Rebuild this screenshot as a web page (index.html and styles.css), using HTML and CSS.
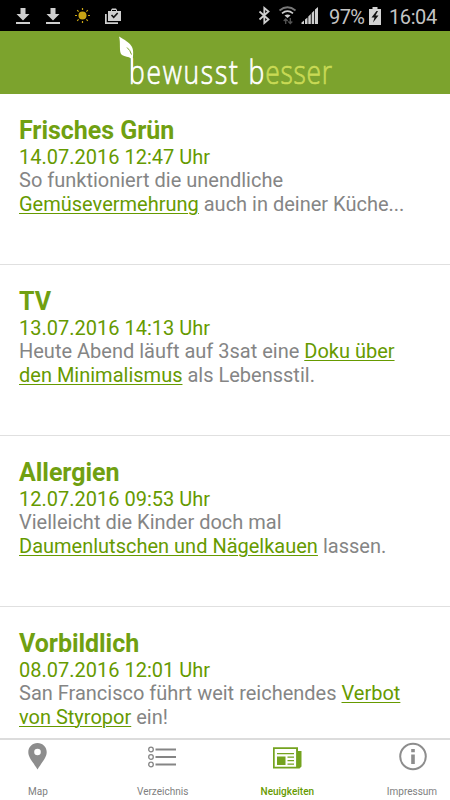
FILE: index.html
```html
<!DOCTYPE html>
<html lang="de">
<head>
<meta charset="utf-8">
<title>bewusst besser</title>
<link rel="stylesheet" href="styles.css">
</head>
<body>
<div class="app">
  <div class="status">
    <svg class="status-left" width="130" height="31" viewBox="0 0 130 31">
      <g fill="#cfcfcf">
        <path d="M20.500 8h5v6h4L23 20.500 16.500 14h4zM16 22h14v2H16z"/>
        <path d="M50.500 8h5v6h4L53 20.500 46.500 14h4zM46 22h14v2H46z"/>
        <path fill-rule="evenodd" d="M108 11h3v-1l1-1.500h4l1 1.500v1h4v10h-13zM112 11h4v-1h-4z"/>
        <path d="M105 14h1.700v8.300H118V24h-13z"/>
      </g>
      <path d="m111.500 15 2.200 2.400 4-4.400" fill="none" stroke="#111" stroke-width="1.600"/>
      <circle cx="82.500" cy="15.500" r="4" fill="#c9a514"/>
      <path d="M82.500 8v2M82.500 21v2M75 15.500h2M88 15.500h2M77.200 10.200l1.400 1.400M86.400 19.400l1.400 1.400M77.200 20.800l1.400-1.400M86.400 11.600l1.400-1.400" stroke="#c9a514" stroke-width="1.200"/>
    </svg>
    <div class="status-right">
      <svg width="66" height="31" viewBox="256 0 66 31">
        <path d="m259.500 11.500 9 8-4.200 3.500V8l4.200 3.500-9 8" fill="none" stroke="#cfcfcf" stroke-width="1.800"/>
        <path d="M279.500 10.500q8-6.500 16 0" fill="none" stroke="#777" stroke-width="1.700"/>
        <path d="M282 13.300q5.500-4.500 11 0" fill="none" stroke="#cfcfcf" stroke-width="1.700"/>
        <path d="M284.500 15.500q3-2.200 6 0L287.500 18z" fill="#cfcfcf"/>
        <path d="M285.700 24v-5m-2 2 2-2 2 2M290.300 18v5.500m-2-2 2 2 2-2" fill="none" stroke="#555" stroke-width="1.300"/>
        <path d="M301.500 24v-1.500l2.500-2V24zM305 24v-4.500l2.500-2V24zM308.300 24v-7.500l2.500-2.500v10zM311.700 24V13l2.500-2.500V24zM315 24V9.500L318 7v17z" fill="#cfcfcf"/>
      </svg>
      <span class="battery-text">97%</span>
      <svg class="battery" width="12" height="18" viewBox="0 0 12 18">
        <path d="M3.500 0h5v2H12v16H0V2h3.500z" fill="#d4d4d4"/>
        <path d="M7.500 4 2.500 10.500h3L4 15.500 9.500 8.500h-3L9 4z" fill="#111"/>
      </svg>
      <span class="clock">16:04</span>
    </div>
  </div>
  <header class="header">
    <svg width="450" height="63" viewBox="0 31 450 63">
      <path d="M119 36.500C121 42 118.500 53 122 55c3 1.800 6.500 1.500 9 3.500v22h1.900V58C134.500 46 131 43.500 119 36.500z" fill="#fff"/>
      <path d="M127 47.500q3.200 2.500 4.500 7" fill="none" stroke="#7ca32d" stroke-width="1"/>
      <g class="logo" transform="scale(.8 1)">
        <text class="logo-word" x="161.200" y="84" fill="#fff" stroke="#fff">bewusst</text>
        <text x="310.500" y="84" fill="#fff" stroke="#fff">b</text>
        <text x="331.600" y="84" fill="#c9da55" stroke="#c9da55">esser</text>
      </g>
    </svg>
  </header>
  <main class="list">
    <article class="item"><h2>Frisches Grün</h2><time>14.07.2016 12:47 Uhr</time><p>So funktioniert die unendliche<br><a>Gemüsevermehrung</a> auch in deiner Küche...</p></article>
    <article class="item"><h2>TV</h2><time>13.07.2016 14:13 Uhr</time><p>Heute Abend läuft auf 3sat eine <a>Doku über<br>den Minimalismus</a> als Lebensstil.</p></article>
    <article class="item"><h2>Allergien</h2><time>12.07.2016 09:53 Uhr</time><p>Vielleicht die Kinder doch mal<br><a>Daumenlutschen und Nägelkauen</a> lassen.</p></article>
    <article class="item"><h2>Vorbildlich</h2><time>08.07.2016 12:01 Uhr</time><p>San Francisco führt weit reichendes <a>Verbot<br>von Styropor</a> ein!</p></article>
  </main>
  <nav class="tabs">
    <div class="tab">
      <svg width="30" height="34" viewBox="0 0 30 34"><path fill="#8d8d8d" fill-rule="evenodd" d="M14.500 3c-5.200 0-9.200 4-9.200 9 0 5.500 4 9 9.200 17.500 5.200-8.500 9.200-12 9.200-17.500 0-5-4-9-9.200-9zm0 5.700a3.300 3.300 0 1 1 0 6.600 3.300 3.300 0 0 1 0-6.600z"/></svg>
      <span>Map</span>
    </div>
    <div class="tab">
      <svg width="30" height="34" viewBox="0 0 30 34"><g fill="none" stroke="#858585"><g stroke-width="1.300"><circle cx="3" cy="9.500" r="2.300"/><circle cx="3" cy="17" r="2.300"/><circle cx="3" cy="24.500" r="2.300"/></g><path d="M7.500 9.500H28M7.500 17H28M7.500 24.500H28" stroke-width="2"/></g></svg>
      <span>Verzeichnis</span>
    </div>
    <div class="tab active">
      <svg width="30" height="34" viewBox="0 0 30 34"><path fill="#74a31f" fill-rule="evenodd" d="M1 7.300h25V11h3.500v15.500l-2 2H1zM2.700 9V26.800h21.400V9z"/><path fill="#74a31f" d="M5 13h17v1.300H5zM5 16.500h8.500V25H5zM15.500 16.500H22v1.300h-6.500zM15.500 20H22v1.300h-6.500zM15.500 23.500H22v1.300h-6.500z"/></svg>
      <span>Neuigkeiten</span>
    </div>
    <div class="tab">
      <svg width="30" height="34" viewBox="0 0 30 34"><circle cx="16" cy="16.500" r="12.800" fill="none" stroke="#8d8d8d" stroke-width="2"/><path d="M14.200 9h3.600v3.200h-3.600zM14.200 14.500h3.600V24h-3.600z" fill="#8d8d8d"/></svg>
      <span>Impressum</span>
    </div>
  </nav>
</div>
</body>
</html>
```
FILE: styles.css
```css
* { box-sizing: border-box; }
body { margin: 0; font-family: Roboto, sans-serif; background: #fff; }
svg { display: block; }
.app { width: 450px; height: 800px; display: flex; flex-direction: column; overflow: hidden; }
.status { height: 31px; flex: none; background: #000; display: flex; justify-content: space-between; }
.status-right { display: flex; align-items: center; width: 194px; color: #c4c4c4; font-size: 20px; line-height: 31px; font-weight: 400; }
.battery-text { width: 36px; margin-left: 7px; letter-spacing: -0.600px; padding-top: 3px; }
.battery { margin-left: 4px; }
.clock { margin-left: 8px; padding-top: 3px; letter-spacing: -0.400px; }
.header { height: 63px; flex: none; background: #7ca32d; }
.logo { font-family: "Open Sans", sans-serif; font-weight: 300; font-size: 33px; stroke-width: 0.700px; letter-spacing: 0.900px; }
.logo-word { letter-spacing: 2.200px; }
.list { flex: 1; min-height: 0; overflow: hidden; }
.item { height: 171px; padding: 22px 19px 0; border-bottom: 1px solid #e0e0e0; }
.item h2 { margin: 0; font-size: 25px; line-height: 30px; font-weight: 700; letter-spacing: -0.050px; color: #70a011; }
.item time { display: block; font-size: 20px; line-height: 23px; color: #669a00; }
.item p { margin: 0; font-size: 20px; line-height: 23.500px; color: #858585; white-space: nowrap; }
.item a { color: #669a00; text-decoration: underline; text-decoration-thickness: 1px; text-underline-offset: 2px; }
.tabs { height: 62px; flex: none; border-top: 2px solid #dcdcdc; display: flex; justify-content: space-between; padding: 0 12px 0 12px; background: #fff; }
.tab { width: 52px; display: flex; flex-direction: column; align-items: center; font-size: 10px; line-height: 12px; color: #808080; }
.tab span { margin-top: 12px; }
.tab.active { color: #669a00; font-weight: 500; }
```
